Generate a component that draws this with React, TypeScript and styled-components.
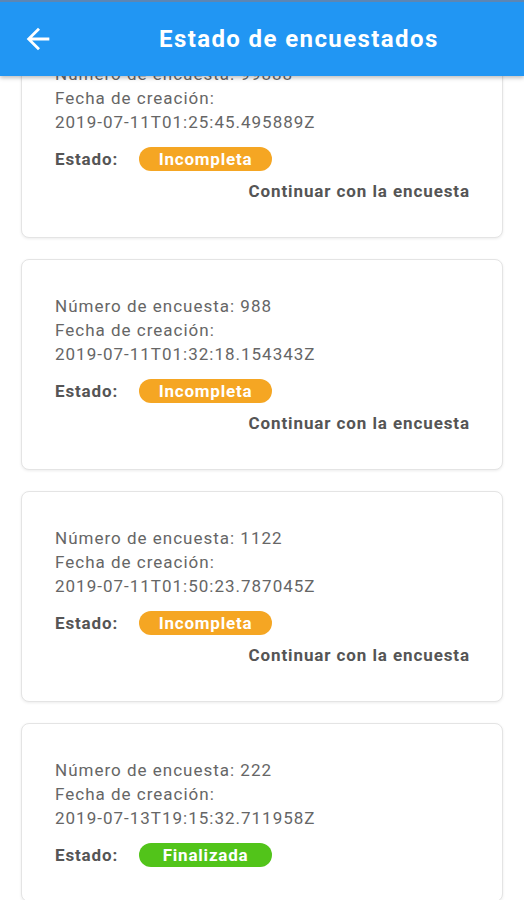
import { useLayoutEffect, useRef } from 'react'
import styled, { createGlobalStyle } from 'styled-components'

const GlobalStyle = createGlobalStyle`
  html, body {
    margin: 0;
    padding: 0;
    height: 100%;
    background: #ffffff;
    font-family: Roboto, "Noto Sans", Arial, sans-serif;
  }
  #root {
    height: 100%;
  }
`

const COLORS = {
  primary: '#2196f3',
  text: '#666666',
  label: '#555555',
  incomplete: '#f5a623',
  done: '#52c41a',
}

const Screen = styled('div')`
  display: flex;
  flex-direction: column;
  height: 100vh;
  overflow: hidden;
`

const Header = styled('header')`
  position: relative;
  z-index: 2;
  flex: none;
  display: flex;
  align-items: center;
  height: 74px;
  border-top: 2px solid #5c86b4;
  background-color: ${COLORS.primary};
  box-shadow: 0 2px 4px rgba(0, 0, 0, 0.25);
`

const BackButton = styled('button')`
  display: flex;
  align-items: center;
  justify-content: center;
  width: 34px;
  height: 34px;
  margin-left: 21px;
  padding: 0;
  border: 0;
  background: transparent;
  cursor: pointer;
`

const Title = styled('h1')`
  margin: 0 0 0 104px;
  color: #ffffff;
  font-size: 24px;
  font-weight: 700;
  letter-spacing: 1.4px;
`

const ListViewport = styled('div')`
  flex: 1;
  overflow: hidden;
`

const List = styled('div')`
  display: flex;
  flex-direction: column;
  gap: 21px;
  padding: 20px 21px 40px;
`

const Card = styled('div')`
  display: flex;
  flex-direction: column;
  padding: 34px 32px 34px 33px;
  border: 1px solid #e4e4e4;
  border-radius: 8px;
  background: #ffffff;
  box-shadow: 0 1px 3px rgba(0, 0, 0, 0.08);
`

const Line = styled('div')`
  color: ${COLORS.text};
  font-size: 17px;
  line-height: 24px;
  letter-spacing: 1px;
`

const StatusRow = styled('div')`
  display: flex;
  align-items: center;
  gap: 21px;
  margin-top: 13px;
  height: 24px;
`

const StatusLabel = styled('span')`
  color: ${COLORS.label};
  font-size: 17px;
  font-weight: 700;
  letter-spacing: 0.85px;
`

const Badge = styled('span')<{ $done?: boolean }>`
  display: inline-flex;
  align-items: center;
  justify-content: center;
  width: 133px;
  height: 24px;
  border-radius: 12px;
  background-color: ${({ $done }) => ($done ? COLORS.done : COLORS.incomplete)};
  color: #ffffff;
  font-size: 17px;
  font-weight: 700;
  letter-spacing: 0.8px;
`

const ContinueLink = styled('a')`
  align-self: flex-end;
  margin-top: 8px;
  color: ${COLORS.label};
  font-size: 17px;
  font-weight: 700;
  line-height: 24px;
  letter-spacing: 0.9px;
  text-decoration: none;
  cursor: pointer;
`

type Survey = {
  id: number
  createdAt: string
  done?: boolean
}

const SURVEYS: Survey[] = [
  { id: 99888, createdAt: '2019-07-11T01:25:45.495889Z' },
  { id: 988, createdAt: '2019-07-11T01:32:18.154343Z' },
  { id: 1122, createdAt: '2019-07-11T01:50:23.787045Z' },
  { id: 222, createdAt: '2019-07-13T19:15:32.711958Z', done: true },
]

const BackIcon = () => (
  <svg width="34" height="34" viewBox="0 0 24 24" fill="#ffffff">
    <path d="M20 11H7.83l5.59-5.59L12 4l-8 8 8 8 1.41-1.41L7.83 13H20v-2z" />
  </svg>
)

const App = () => {
  const viewport = useRef<HTMLDivElement>(null)

  // the list is shown scrolled a little, first card partly under the header
  useLayoutEffect(() => {
    if (viewport.current) viewport.current.scrollTop = 69
  }, [])

  return (
    <>
      <GlobalStyle />
      <Screen>
        <Header>
          <BackButton aria-label="Volver">
            <BackIcon />
          </BackButton>
          <Title>Estado de encuestados</Title>
        </Header>
        <ListViewport ref={viewport}>
          <List>
            {SURVEYS.map(({ id, createdAt, done }) => (
              <Card key={id}>
                <Line>Número de encuesta: {id}</Line>
                <Line>Fecha de creación:</Line>
                <Line>{createdAt}</Line>
                <StatusRow>
                  <StatusLabel>Estado:</StatusLabel>
                  <Badge $done={done}>{done ? 'Finalizada' : 'Incompleta'}</Badge>
                </StatusRow>
                {!done && <ContinueLink>Continuar con la encuesta</ContinueLink>}
              </Card>
            ))}
          </List>
        </ListViewport>
      </Screen>
    </>
  )
}

export default App
